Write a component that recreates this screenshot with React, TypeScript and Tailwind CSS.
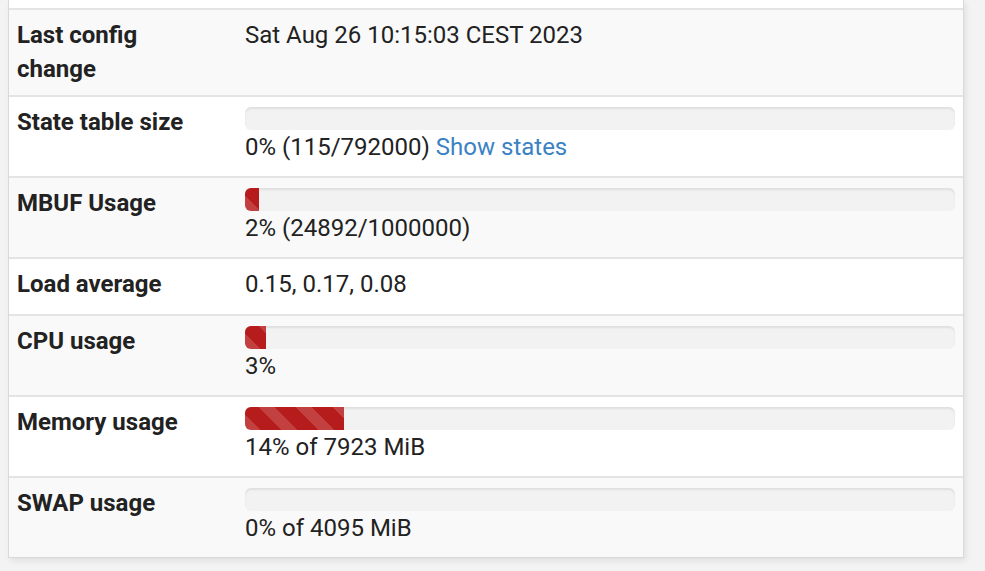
import type { ReactNode } from 'react';

interface InfoRow {
  label: ReactNode;
  value?: ReactNode;
  percent?: number;
  tall?: boolean;
}

const rows: InfoRow[] = [
  {
    label: (
      <>
        Last config
        <br />
        change
      </>
    ),
    value: 'Sat Aug 26 10:15:03 CEST 2023',
    tall: true,
  },
  {
    label: 'State table size',
    percent: 0,
    value: (
      <>
        0% (115/792000){' '}
        <a href="#" className="text-[#3b82c4] no-underline">
          Show states
        </a>
      </>
    ),
  },
  { label: 'MBUF Usage', percent: 2, value: '2% (24892/1000000)' },
  { label: 'Load average', value: '0.15, 0.17, 0.08' },
  { label: 'CPU usage', percent: 3, value: '3%' },
  { label: 'Memory usage', percent: 14, value: '14% of 7923 MiB' },
  { label: 'SWAP usage', percent: 0, value: '0% of 4095 MiB' },
];

/* ─── Progress bar ─── */
const Progress = ({ percent }: { percent: number }) => (
  <div className="h-[23px] w-full overflow-hidden rounded-[6px] bg-[#f2f2f2] shadow-[inset_0_2px_2px_rgba(0,0,0,0.08)]">
    {percent > 0 && (
      <div
        className="h-full bg-[#b71c1c] bg-[repeating-linear-gradient(45deg,rgba(255,255,255,.16)_0_11px,transparent_11px_26px)]"
        style={{ width: `${percent}%` }}
      />
    )}
  </div>
);

export default function App() {
  return (
    <div className="min-h-[571px] bg-[#f3f3f3] pl-2 font-['Roboto','Liberation_Sans',sans-serif] text-[24px] leading-[34px] text-[#222]">
      <div className="w-[956px] border-x border-b border-[#d9d9d9] bg-white shadow-[2px_3px_6px_rgba(0,0,0,0.08)]">
        {/* tail of the row above */}
        <div className="h-2 bg-white" />

        {rows.map((row, i) => (
          <div
            key={i}
            className={`flex border-t-2 border-[#e4e4e4] ${i % 2 === 0 ? 'bg-[#f9f9f9]' : 'bg-white'} ${
              row.percent !== undefined ? 'h-[81px]' : row.tall ? 'h-[87px]' : 'h-[57px]'
            }`}
          >
            <div className="w-[228px] shrink-0 px-2 pt-2 font-bold">{row.label}</div>
            <div className="flex-1 px-2 pt-2">
              {row.percent !== undefined && (
                <div className="pt-[2px]">
                  <Progress percent={row.percent} />
                </div>
              )}
              <div>{row.value}</div>
            </div>
          </div>
        ))}
      </div>
    </div>
  );
}
